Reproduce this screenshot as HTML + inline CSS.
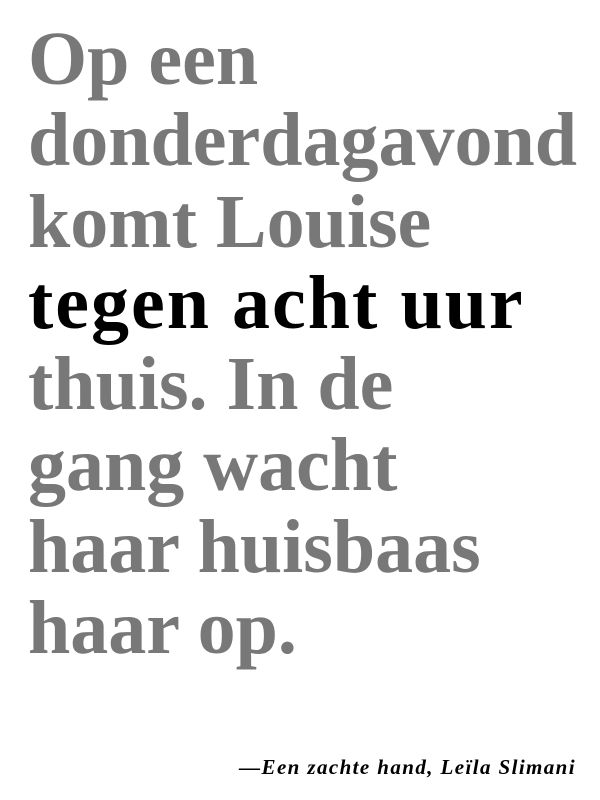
<!DOCTYPE html>
<html><head><meta charset="utf-8"><style>
html,body{margin:0;padding:0;background:#fff;width:600px;height:800px;overflow:hidden}
.q{position:absolute;left:28px;top:19px;font-family:"Liberation Serif",serif;font-weight:bold;font-size:76px;line-height:81.3px;color:#787878;white-space:nowrap}
.q b{color:#000;letter-spacing:2px}
.a{position:absolute;right:24px;top:755px;font-family:"Liberation Serif",serif;font-style:italic;font-weight:bold;font-size:21px;letter-spacing:1.4px;color:#000}
</style></head><body>
<div class="q">Op een<br>donderdagavond<br>komt Louise<br><b>tegen acht uur</b><br>thuis. In de<br>gang wacht<br>haar huisbaas<br>haar op.</div>
<div class="a">—Een zachte hand, Leïla Slimani</div>
</body></html>
